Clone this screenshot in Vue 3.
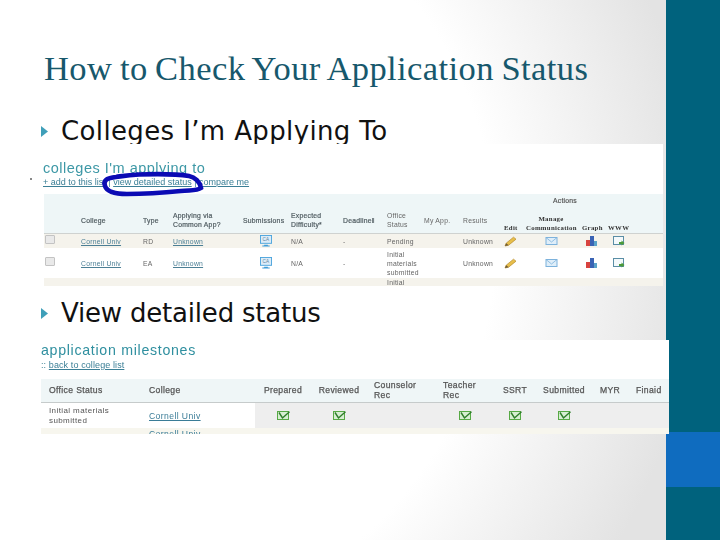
<script setup>
const apps = [
  { type: 'RD', status: ['Pending'], cls: 'r1' },
  { type: 'EA', status: ['Initial', 'materials', 'submitted'], cls: 'r2' }
]
const milestoneCols = [
  { label: 'Prepared', check: true, cls: 'mc' },
  { label: 'Reviewed', check: true, cls: 'mc' },
  { label: ['Counselor', 'Rec'], check: false, cls: 'mp7' },
  { label: ['Teacher', 'Rec'], check: true, cls: 'mt' },
  { label: 'SSRT', check: true, cls: 'mc' },
  { label: 'Submitted', check: true, cls: 'mc' },
  { label: 'MYR', check: false, cls: 'mp13' },
  { label: 'Finaid', check: false, cls: 'ml' }
]
</script>

<template>
  <div class="slide">
    <main class="content">
      <h1 class="title">How to Check Your Application Status</h1>

      <div class="bullet b1">
        <svg class="arrow" width="7" height="11" viewBox="0 0 7 11"><path d="M0 0L7 5.5L0 11Z" fill="#3f9fb9" /></svg>
        <span>Colleges I’m Applying To</span>
      </div>

      <section class="shot shot1">
        <i class="speck"></i>
        <div class="soft">
          <h2 class="shot-title">colleges I'm applying to</h2>
          <p class="shot-links">
            <a>+ add to this list</a> | <a>view detailed status</a> | <a>compare me</a>
          </p>
          <div class="grid1 head1">
            <div class="actions">Actions</div>
            <div class="h2c c2">College</div>
            <div class="h2c c3">Type</div>
            <div class="h2c c4">Applying via<br />Common App?</div>
            <div class="h2c c5">Submissions</div>
            <div class="h2c c6">Expected<br />Difficulty*</div>
            <div class="h2c c7">Deadline‖</div>
            <div class="h2c c8 lite">Office<br />Status</div>
            <div class="h2c c9 lite">My App.</div>
            <div class="h2c c10 lite">Results</div>
            <div class="serif c11 sl">Edit</div>
            <div class="serif c12 manage">Manage<br />Communication</div>
            <div class="serif c13 sl">Graph</div>
            <div class="serif c14 sl">WWW</div>
          </div>
          <div v-for="a in apps" :key="a.type" class="grid1 row1" :class="a.cls">
            <div class="cb"></div>
            <div><a>Cornell Univ</a></div>
            <div>{{ a.type }}</div>
            <div><a>Unknown</a></div>
            <div class="ic">
              <svg width="14" height="12" viewBox="0 0 14 13">
                <rect x="1" y="0.5" width="12" height="8.5" fill="#dcecf8" stroke="#4aa3dc" />
                <text x="7" y="7" font-size="5" text-anchor="middle" fill="#5b7f9c" font-family="Liberation Sans, sans-serif">CA</text>
                <path d="M5 10.5H9V11.5H11V12.5H3V11.5H5Z" fill="#3d9bd8" />
              </svg>
            </div>
            <div>N/A</div>
            <div>-</div>
            <div class="status"><span v-for="s in a.status" :key="s">{{ s }}</span></div>
            <div></div>
            <div>Unknown</div>
            <div>
              <svg width="13" height="11" viewBox="0 0 13 11">
                <path d="M1 10L2.2 7.2L9.5 1.2L12 3.2L4.6 9.2Z" fill="#e8bf4a" stroke="#b48a2c" stroke-width=".7" />
                <path d="M1 10L2.2 7.2L4.6 9.2Z" fill="#6b5a3a" />
              </svg>
            </div>
            <div class="ic2">
              <svg width="13" height="8" viewBox="0 0 12 8">
                <rect x=".5" y=".5" width="11" height="7" fill="#dfeef9" stroke="#7db2dc" />
                <path d="M.5 .5L6 5L11.5 .5" fill="none" stroke="#7db2dc" stroke-width=".8" />
              </svg>
            </div>
            <div class="ic3">
              <svg width="12" height="10" viewBox="0 0 12 10">
                <rect x="0" y="4" width="4" height="6" fill="#d8433f" />
                <rect x="4" y="0" width="4" height="10" fill="#3a63b4" />
                <rect x="8" y="5" width="3" height="5" fill="#5aa3c9" />
              </svg>
            </div>
            <div class="ic4">
              <svg width="12" height="10" viewBox="0 0 12 10">
                <rect x=".5" y=".5" width="10" height="8" fill="#f4f9fb" stroke="#5a8ea6" />
                <path d="M6 6H8.5V4.5L11.5 7L8.5 9.5V8H6Z" fill="#4c9b3a" />
              </svg>
            </div>
          </div>
          <div class="grid1 row3"><div class="c8 cut">Initial</div></div>
          <svg class="ring" width="106" height="27" viewBox="0 0 106 27">
            <path d="M6 15C4 9 8 7 17 6C24 5 28 4 40 3.5C55 3 78 3 90 5C96 6 101 11 102 17C98 20 92 19 82 20C62 22 44 23 28 23C18 23 8 21 6 15Z" fill="none" stroke="#0b0bb4" stroke-width="4.6" />
          </svg>
        </div>
      </section>

      <div class="bullet b2">
        <svg class="arrow" width="7" height="11" viewBox="0 0 7 11"><path d="M0 0L7 5.5L0 11Z" fill="#3f9fb9" /></svg>
        <span>View detailed status</span>
      </div>

      <section class="shot shot2">
        <div class="soft">
          <h2 class="shot-title st2">application milestones</h2>
          <p class="shot-links sl2">:: <a>back to college list</a></p>
          <div class="grid2 head2">
            <div class="mo">Office Status</div>
            <div>College</div>
            <div v-for="c in milestoneCols" :key="c.cls + c.label" :class="c.cls">
              <template v-if="Array.isArray(c.label)">{{ c.label[0] }}<br />{{ c.label[1] }}</template>
              <template v-else>{{ c.label }}</template>
            </div>
          </div>
          <div class="grid2 row2m">
            <div class="mo wh">Initial materials<br />submitted</div>
            <div class="wh"><a class="big">Cornell Univ</a></div>
            <div v-for="c in milestoneCols" :key="c.cls + c.label" class="mcell">
              <svg v-if="c.check" width="13" height="9" viewBox="0 0 13 9">
                <rect x=".5" y=".5" width="11" height="8" fill="#d7eed2" stroke="#57a945" />
                <path d="M2 1.5L5.5 7L12.5 .8" fill="none" stroke="#2f7d2a" stroke-width="1.4" />
              </svg>
            </div>
          </div>
          <div class="grid2 row3m">
            <div></div>
            <div><a class="big">Cornell Univ</a></div>
          </div>
        </div>
      </section>
    </main>

    <aside class="side">
      <div class="accent"></div>
    </aside>
  </div>
</template>

<style>
html, body { margin: 0; padding: 0; }
</style>

<style scoped>
.slide {
  width: 720px;
  height: 540px;
  display: flex;
  overflow: hidden;
  background: radial-gradient(circle at 100px 241px, #fff 395px, #e3e3e3 600px);
}
.content { width: 666px; flex: none; }
.side {
  width: 54px;
  flex: none;
  background: #00627d;
  display: flex;
  flex-direction: column;
  padding-top: 432px;
  box-sizing: border-box;
}
.accent { height: 55px; background: #0f6cbf; }
.title {
  margin: 0;
  padding: 47px 0 0 44px;
  height: 118px;
  box-sizing: border-box;
  font: 400 34.5px/42px "Liberation Serif", serif;
  letter-spacing: .42px;
  word-spacing: -1.5px;
  color: #17586c;
  white-space: nowrap;
}
.bullet {
  display: flex;
  align-items: center;
  height: 26px;
  font: 400 26px/26px "DejaVu Sans", sans-serif;
  color: #111;
  white-space: nowrap;
}
.arrow { margin: 0 13px 0 41px; flex: none; }
.b1 { letter-spacing: .37px; }
.b2 { margin-top: 13px; margin-bottom: 14px; letter-spacing: -.2px; padding-top: 1px; }
.shot { position: relative; background: #fff; }
.shot1 { margin: 0 3px 0 43px; height: 142px; }
.shot2 { margin: 0 -3px 0 40px; height: 94px; z-index: 2; overflow: hidden; }
.soft { filter: blur(.4px); position: relative; height: 100%; overflow: hidden; }
.speck { position: absolute; left: -13px; top: 34px; width: 2px; height: 2px; background: #888; }
.shot-title {
  margin: 0;
  padding-top: 17px;
  font: 400 14.5px/14px "Liberation Sans", sans-serif;
  letter-spacing: .5px;
  color: #3d98a6;
}
.st2 { padding-top: 3px; padding-left: 1px; font-size: 14.2px; letter-spacing: .7px; color: #2f8f9f; }
.shot-links {
  margin: 0;
  height: 19px;
  font: 400 9px/14px "Liberation Sans", sans-serif;
  color: #3b8194;
  white-space: nowrap;
}
.sl2 { height: 12px; margin-top: 3px; padding-left: 1px; font-size: 9px; line-height: 11px; letter-spacing: .1px; }
a { text-decoration: underline; color: #3b7f96; }
.ring { position: absolute; left: 56px; top: 27px; }

.grid1 {
  display: grid;
  grid-template-columns: 37px 62px 30px 70px 48px 52px 44px 37px 39px 41px 22px 56px 26px 55px;
  margin-left: 1px;
  font: 400 6.8px/9px "Liberation Sans", sans-serif;
  color: #666;
  letter-spacing: .25px;
}
.head1 {
  grid-template-rows: 12px 28px;
  height: 40px;
  background: #eef6f7;
  border-bottom: 1px solid #cfd2d0;
  box-sizing: border-box;
  font-weight: 700;
  color: #4f5b60;
}
.actions { grid-column: 12 / 14; grid-row: 1; text-align: center; align-self: center; color: #555; padding: 1px 4px 0 0; font-weight: 400; -webkit-text-stroke: .2px #555; }
.h2c { grid-row: 2; align-self: center; white-space: nowrap; font-weight: 400; -webkit-text-stroke: .2px #4f5b60; }
.lite { font-weight: 400; color: #666; -webkit-text-stroke: 0; }
.serif {
  grid-row: 2;
  align-self: end;
  padding-bottom: 2px;
  font: 700 6.8px/8.5px "Liberation Serif", serif;
  letter-spacing: .3px;
  color: #333;
  text-align: center;
  white-space: nowrap;
}
.sl { text-align: left; }
.manage { padding-right: 6px; }
.c2 { grid-column: 2; } .c3 { grid-column: 3; } .c4 { grid-column: 4; } .c5 { grid-column: 5; }
.c6 { grid-column: 6; } .c7 { grid-column: 7; } .c8 { grid-column: 8; } .c9 { grid-column: 9; }
.c10 { grid-column: 10; } .c11 { grid-column: 11; } .c12 { grid-column: 12; } .c13 { grid-column: 13; }
.c14 { grid-column: 14; }
.row1 { align-items: center; }
.row1 a { color: #4c7f95; }
.r1 { height: 14px; background: #f5f3ec; }
.r2 { height: 30px; }
.row3 { height: 8px; background: #f5f3ec; overflow: hidden; }
.cut { line-height: 10px; }
.cb { width: 8px; height: 7px; margin-left: 1px; border: 1px solid #c3c3c3; background: #e9e9e9; border-radius: 1px; margin-top: -4px; }
.status { display: flex; flex-direction: column; line-height: 9px; }
.ic { padding-left: 16px; display: flex; }
.ic2 { padding-left: 19px; display: flex; }
.ic3 { padding-left: 4px; display: flex; }
.ic4 { padding-left: 5px; display: flex; }
.row1 svg { display: block; }

.grid2 {
  display: grid;
  grid-template-columns: 108px 106px 56px 56px 74px 48px 52px 46px 49px 34px;
  margin-left: 1px;
  font: 400 8.6px/9.5px "Liberation Sans", sans-serif;
  letter-spacing: .4px;
  color: #555;
}
.head2 {
  height: 24px;
  margin-top: 7px;
  background: #eff6f7;
  border-bottom: 1px solid #c6cbcb;
  box-sizing: border-box;
  align-items: center;
  letter-spacing: .35px;
}
.head2 > div { white-space: nowrap; -webkit-text-stroke: .25px #555; }
.mo { padding-left: 8px; }
.mc { text-align: center; }
.mp7 { padding-left: 7px; }
.mt { padding-left: 2px; }
.mp13 { padding-left: 13px; }
.ml { text-align: left; }
.row2m { height: 25px; background: #eee; }
.row2m > div { display: flex; align-items: center; }
.row2m .mo { font-size: 8px; }
.wh { background: #fff; }
.mcell { justify-content: center; }
.row3m { height: 6px; padding-top: 2px; box-sizing: border-box; background: #f7f6ee; overflow: hidden; }
.big { font-size: 8.6px; color: #3a7c97; line-height: 8px; display: block; }
</style>
